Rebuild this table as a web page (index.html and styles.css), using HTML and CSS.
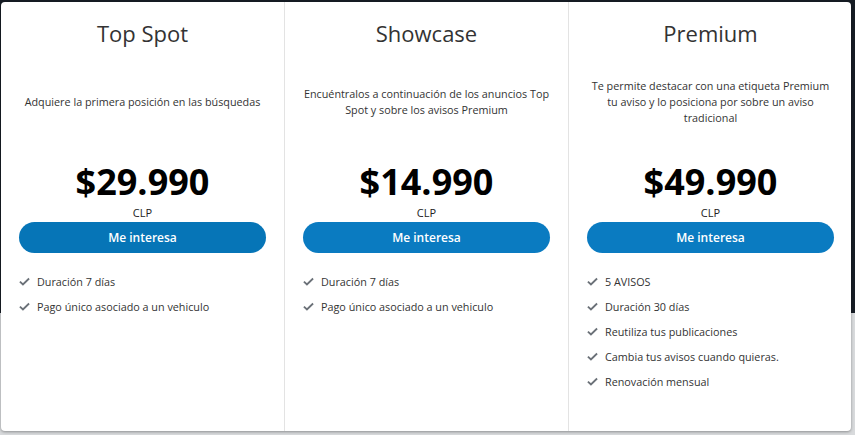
FILE: index.html
```html
<!DOCTYPE html>
<html lang="es">
<head>
<meta charset="utf-8">
<link rel="stylesheet" href="styles.css">
</head>
<body>
<div class="card">
  <div class="plan">
    <h2 class="title">Top Spot</h2>
    <div class="desc"><p>Adquiere la primera posición en las búsquedas</p></div>
    <div class="price">$29.990</div>
    <div class="cur">CLP</div>
    <button class="btn btn-dark">Me interesa</button>
    <ul class="list">
      <li><svg class="chk" viewBox="0 0 12 9"><path d="M1 4.6 L4.3 7.7 L11 1.2" /></svg>Duración 7 días</li>
      <li><svg class="chk" viewBox="0 0 12 9"><path d="M1 4.6 L4.3 7.7 L11 1.2" /></svg>Pago único asociado a un vehiculo</li>
    </ul>
  </div>
  <div class="plan">
    <h2 class="title">Showcase</h2>
    <div class="desc"><p>Encuéntralos a continuación de los anuncios Top Spot y sobre los avisos Premium</p></div>
    <div class="price">$14.990</div>
    <div class="cur">CLP</div>
    <button class="btn">Me interesa</button>
    <ul class="list">
      <li><svg class="chk" viewBox="0 0 12 9"><path d="M1 4.6 L4.3 7.7 L11 1.2" /></svg>Duración 7 días</li>
      <li><svg class="chk" viewBox="0 0 12 9"><path d="M1 4.6 L4.3 7.7 L11 1.2" /></svg>Pago único asociado a un vehiculo</li>
    </ul>
  </div>
  <div class="plan">
    <h2 class="title">Premium</h2>
    <div class="desc"><p>Te permite destacar con una etiqueta Premium tu aviso y lo posiciona por sobre un aviso tradicional</p></div>
    <div class="price">$49.990</div>
    <div class="cur">CLP</div>
    <button class="btn">Me interesa</button>
    <ul class="list">
      <li><svg class="chk" viewBox="0 0 12 9"><path d="M1 4.6 L4.3 7.7 L11 1.2" /></svg>5 AVISOS</li>
      <li><svg class="chk" viewBox="0 0 12 9"><path d="M1 4.6 L4.3 7.7 L11 1.2" /></svg>Duración 30 días</li>
      <li><svg class="chk" viewBox="0 0 12 9"><path d="M1 4.6 L4.3 7.7 L11 1.2" /></svg>Reutiliza tus publicaciones</li>
      <li><svg class="chk" viewBox="0 0 12 9"><path d="M1 4.6 L4.3 7.7 L11 1.2" /></svg>Cambia tus avisos cuando quieras.</li>
      <li><svg class="chk" viewBox="0 0 12 9"><path d="M1 4.6 L4.3 7.7 L11 1.2" /></svg>Renovación mensual</li>
    </ul>
  </div>
</div>
</body>
</html>
```
FILE: styles.css
```css
* { box-sizing: border-box; }
html, body { margin: 0; padding: 0; }
body {
  width: 855px;
  height: 435px;
  overflow: hidden;
  background: linear-gradient(to bottom, #161c24 0, #171d25 313px, #d8dadc 313px, #d8dadc 100%);
  font-family: "Open Sans", "Liberation Sans", sans-serif;
  color: #333;
  padding: 2px 4px 0 1px;
}
.card {
  background: #fff;
  width: 850px;
  height: 429px;
  border-radius: 4px;
  box-shadow: 0 1px 3px rgba(0,0,0,0.35);
  display: grid;
  grid-template-columns: 283px 284px 283px;
}
.plan {
  padding: 16px 18px 0 18px;
  display: flex;
  flex-direction: column;
  align-items: stretch;
  border-left: 1px solid #e3e3e3;
}
.plan:first-child { border-left: none; }
.plan:last-child { padding-right: 17px; }
.title {
  margin: 0;
  font-size: 22px;
  font-weight: 400;
  line-height: 30px;
  text-align: center;
  color: #333;
}
.desc {
  margin: 14px 0 0 0;
  height: 80px;
  display: flex;
  align-items: center;
  justify-content: center;
}
.desc p {
  margin: 0;
  font-size: 10.8px;
  line-height: 16px;
  text-align: center;
  color: #333;
}
.price {
  margin-top: 20px;
  font-size: 36px;
  font-weight: 700;
  line-height: 40px;
  text-align: center;
  color: #000;
}
.cur {
  margin-top: 4px;
  font-size: 11px;
  line-height: 14px;
  text-align: center;
  color: #222;
}
.btn {
  margin-top: 2px;
  height: 31px;
  border: none;
  border-radius: 16px;
  background: #0a7bc1;
  color: #fff;
  font-family: "Open Sans", "Liberation Sans", sans-serif;
  font-size: 12px;
  font-weight: 600;
  padding: 0;
}
.btn-dark { background: #0675b7; }
.list {
  list-style: none;
  margin: 16px 0 0 0;
  padding: 0;
}
.list li {
  display: flex;
  align-items: center;
  height: 25px;
  font-size: 10.8px;
  color: #333;
}
.chk {
  width: 11px;
  height: 9px;
  margin-right: 7px;
  margin-left: 0;
  fill: none;
  stroke: #6b7178;
  stroke-width: 2;
}
```
